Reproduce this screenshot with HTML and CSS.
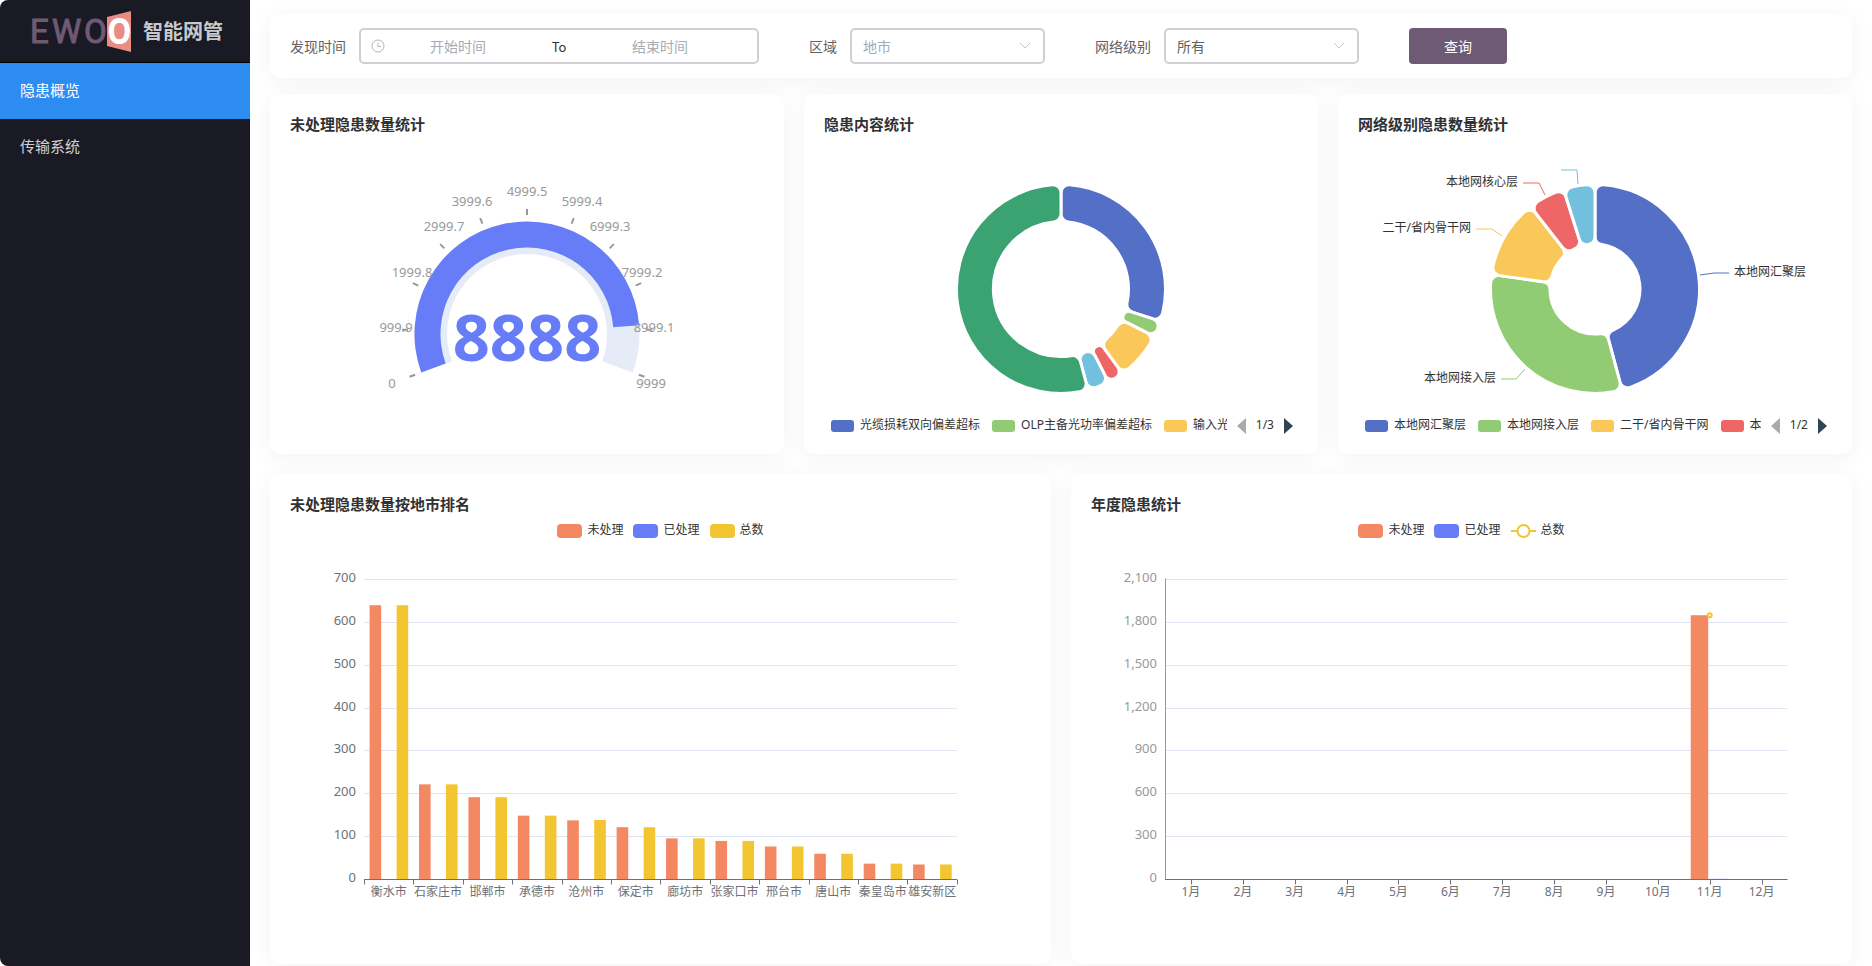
FILE: index.html
```
<!DOCTYPE html>
<html lang="zh-CN">
<head>
<meta charset="utf-8">
<title>智能网管</title>
<link rel="stylesheet" href="styles.css">
</head>
<body>
<div class="app">
  <aside class="sidebar">
    <div class="brand">
      <svg class="brand-logo" width="106" height="44" viewBox="-4 0 106 44" role="img" aria-label="EWOO">
        <text class="logo-text" x="-1 21 53" y="33">EWO</text>
        <path d="M76 7 L100 1 V42 L76 36 Z" fill="#e98c82"/>
        <text class="logo-text logo-text-light" x="77" y="33">O</text>
      </svg>
      <span class="brand-name">智能网管</span>
    </div>
    <nav class="menu">
      <a class="menu-item active" href="#">隐患概览</a>
      <a class="menu-item" href="#">传输系统</a>
    </nav>
  </aside>
  <main class="main">
    <form class="card filters">
      <div class="field">
        <label for="start">发现时间</label>
        <div class="range">
          <svg class="clock" width="14" height="14" viewBox="0 0 14 14" fill="none" stroke="#b4b6bc"><circle cx="7" cy="7" r="6"/><path d="M7 3.5V7.5H10"/></svg>
          <input id="start" type="text" placeholder="开始时间">
          <span class="range-sep">To</span>
          <input type="text" placeholder="结束时间" aria-label="结束时间">
        </div>
      </div>
      <div class="field">
        <label for="area">区域</label>
        <div class="select">
          <select id="area" class="empty"><option>地市</option></select>
          <svg width="12" height="8" viewBox="0 0 12 8" fill="none" stroke="#c0c4cc"><path d="M1 1L6 6L11 1"/></svg>
        </div>
      </div>
      <div class="field">
        <label for="level">网络级别</label>
        <div class="select">
          <select id="level"><option>所有</option></select>
          <svg width="12" height="8" viewBox="0 0 12 8" fill="none" stroke="#c0c4cc"><path d="M1 1L6 6L11 1"/></svg>
        </div>
      </div>
      <button class="query" type="button">查询</button>
    </form>
    <div class="row">
      <section class="card">
        <h2>未处理隐患数量统计</h2>
        <svg class="chart chart-full" id="gauge"></svg>
      </section>
      <section class="card">
        <h2>隐患内容统计</h2>
        <svg class="chart" id="content"></svg>
        <div class="pager">
          <ul class="legend">
            <li><i class="c-blue"></i>光缆损耗双向偏差超标</li>
            <li><i class="c-green"></i>OLP主备光功率偏差超标</li>
            <li><i class="c-yellow"></i>输入光</li>
          </ul>
          <button type="button" aria-label="上一页"><svg width="9" height="16" viewBox="0 0 9 16"><path d="M9 0V16L0 8Z" fill="#aaa"/></svg></button>
          <span>1/3</span>
          <button type="button" aria-label="下一页"><svg width="9" height="16" viewBox="0 0 9 16"><path d="M0 0V16L9 8Z" fill="#2f4554"/></svg></button>
        </div>
      </section>
      <section class="card">
        <h2>网络级别隐患数量统计</h2>
        <svg class="chart" id="levels"></svg>
        <div class="pager">
          <ul class="legend">
            <li><i class="c-blue"></i>本地网汇聚层</li>
            <li><i class="c-green"></i>本地网接入层</li>
            <li><i class="c-yellow"></i>二干/省内骨干网</li>
            <li><i class="c-red"></i>本</li>
          </ul>
          <button type="button" aria-label="上一页"><svg width="9" height="16" viewBox="0 0 9 16"><path d="M9 0V16L0 8Z" fill="#aaa"/></svg></button>
          <span>1/2</span>
          <button type="button" aria-label="下一页"><svg width="9" height="16" viewBox="0 0 9 16"><path d="M0 0V16L9 8Z" fill="#2f4554"/></svg></button>
        </div>
      </section>
    </div>
    <div class="row row-tall">
      <section class="card">
        <h2>未处理隐患数量按地市排名</h2>
        <ul class="legend legend-top">
          <li><i class="c-orange"></i>未处理</li>
          <li><i class="c-indigo"></i>已处理</li>
          <li><i class="c-gold"></i>总数</li>
        </ul>
        <svg class="chart" id="cities"></svg>
      </section>
      <section class="card">
        <h2>年度隐患统计</h2>
        <ul class="legend legend-top">
          <li><i class="c-orange"></i>未处理</li>
          <li><i class="c-indigo"></i>已处理</li>
          <li><svg width="25" height="14" viewBox="0 0 25 14" stroke="#f2c531" stroke-width="2" fill="#fff"><path d="M0 7H25"/><circle cx="12.5" cy="7" r="6"/></svg>总数</li>
        </ul>
        <svg class="chart" id="year"></svg>
      </section>
    </div>
  </main>
</div>
<script src="charts.js"></script>
</body>
</html>
```
FILE: styles.css
```
* { box-sizing: border-box; }
body {
  margin: 0;
  background: #fff;
  color: #303133;
  font-family: "Noto Sans", "Noto Sans CJK SC", sans-serif;
  font-size: 14px;
}
.app { display: flex; min-height: 100vh; }

.sidebar {
  flex: 0 0 250px;
  background: #191a23;
  border-radius: 8px 0 0 8px;
}
.brand {
  display: flex;
  align-items: center;
  gap: 10px;
  height: 63px;
  padding: 0 0 10px 27px;
  border-bottom: 1px solid #000;
}
.brand-logo { flex: none; margin-top: 12px; }
.logo-text { font: 33px Roboto, sans-serif; fill: #6f5a75; stroke: #6f5a75; stroke-width: 1px; }
.logo-text-light { fill: #fff; stroke: #fff; stroke-width: 2px; }
.brand-name { font-family: "Noto Sans CJK SC", sans-serif; font-size: 20px; font-weight: 700; line-height: 24px; margin-top: 10px; color: #c8c9cc; white-space: nowrap; }
.menu-item {
  display: block;
  padding: 0 20px 2px;
  font-size: 15px;
  line-height: 54px;
  color: #d1d1d3;
  text-decoration: none;
}
.menu-item.active { background: #2d8cf0; color: #fff; }

.main {
  flex: 1;
  min-width: 0;
  display: flex;
  flex-direction: column;
  padding: 14px 20px 2px;
}
.card {
  flex: 1;
  min-width: 0;
  background: #fff;
  border-radius: 10px;
  box-shadow: 0 4px 24px rgba(0, 0, 0, 0.05);
}
.filters {
  flex: none;
  display: flex;
  align-items: center;
  gap: 50px;
  padding: 14px 20px;
  margin-bottom: 16px;
}
.field { display: flex; align-items: center; gap: 13px; color: #606266; }
.range, .select {
  display: flex;
  align-items: center;
  height: 36px;
  border: 2px solid #d0cfd6;
  border-radius: 5px;
  background: #fff;
}
.range { width: 400px; padding: 0 24px 0 10px; }
.clock { flex: none; }
.range input {
  flex: 1;
  min-width: 0;
  border: 0;
  padding: 0;
  background: none;
  font: inherit;
  text-align: center;
  outline: none;
}
.range input::placeholder { color: #a8abb2; opacity: 1; }
.range-sep { flex: 0 0 56px; text-align: center; color: #303133; font-size: 13px; font-family: "Noto Sans CJK SC", sans-serif; }
.select { width: 195px; position: relative; }
.select select {
  width: 100%;
  height: 100%;
  border: 0;
  padding: 0 11px;
  background: none;
  appearance: none;
  font: inherit;
  color: #606266;
  outline: none;
}
.select .empty { color: #a8abb2; }
.select svg { position: absolute; right: 12px; pointer-events: none; }
.query {
  width: 98px;
  height: 36px;
  border: 0;
  border-radius: 4px;
  background: #6f5a75;
  color: #fff;
  font: inherit;
}

.row { display: flex; gap: 20px; margin-bottom: 20px; }
.row-tall { flex: 1; margin-bottom: 0; }
.row .card { display: flex; flex-direction: column; height: 360px; padding: 20px; }
.row-tall .card { height: auto; min-height: 490px; }
h2 { margin: 0 0 2px; font-size: 15px; line-height: 20px; font-weight: 700; color: #303133; }

.legend {
  display: flex;
  gap: 12px;
  margin: 0;
  padding: 0;
  list-style: none;
  font-size: 12px;
  line-height: 18px;
  color: #333;
}
.legend li { display: flex; align-items: center; gap: 6px; flex: none; }
.legend i, .legend svg { margin-top: 2px; }
.legend i { width: 23px; height: 12px; border-radius: 3px; }
.legend-top { justify-content: center; gap: 10px; margin: 5px 0 1px; }
.legend-top li { gap: 5px; }
.legend-top i { width: 25px; height: 14px; border-radius: 4px; }
.pager { display: flex; align-items: center; gap: 10px; padding: 0 5px 0 7px; font-size: 12px; line-height: 18px; color: #333; }
.pager .legend { flex: 1; min-width: 0; overflow: hidden; }
.pager button { display: flex; border: 0; padding: 0; background: none; }
.pager button svg { margin-top: 2px; }
.c-blue { background: #5470c6; }
.c-green { background: #91cc75; }
.c-yellow { background: #fac858; }
.c-red { background: #ee6666; }
.c-orange { background: #f38863; }
.c-indigo { background: #677df8; }
.c-gold { background: #f2c531; }

.chart { display: block; width: 100%; height: 280px; }
.chart-full { height: 298px; }
.row-tall .chart { height: 400px; }
.chart text { font-size: 12px; fill: #333; }
.chart .num { font-size: 13px; }
.chart .axis { fill: #6e7079; }
.chart .muted { fill: #999; }
.chart .value { font-size: 65px; font-weight: 700; fill: #677df8; }
```
FILE: charts.js
```
const NS = 'http://www.w3.org/2000/svg';

function add(svg, tag, attrs, text) {
  const el = document.createElementNS(NS, tag);
  for (const key in attrs) el.setAttribute(key, attrs[key]);
  if (text !== undefined) el.textContent = text;
  svg.appendChild(el);
  return el;
}

// Angles run clockwise in degrees from twelve o'clock.
function polar(cx, cy, r, deg) {
  const a = deg * Math.PI / 180;
  return [(cx + r * Math.sin(a)).toFixed(2), (cy - r * Math.cos(a)).toFixed(2)].join(' ');
}

function sector(cx, cy, inner, outer, from, to, corner) {
  const half = (to - from) / 2 * Math.PI / 180;
  const s = Math.sin(Math.min(half, Math.PI / 2));
  const ro = Math.min(corner, outer * s / (1 + s));
  const ri = s < 1 ? Math.min(corner, inner * s / (1 - s)) : corner;
  const ao = Math.asin(ro / (outer - ro)) * 180 / Math.PI;
  const ai = Math.asin(ri / (inner + ri)) * 180 / Math.PI;
  const lo = Math.sqrt((outer - ro) ** 2 - ro ** 2);
  const li = Math.sqrt((inner + ri) ** 2 - ri ** 2);
  const bigO = to - from - 2 * ao > 180 ? 1 : 0;
  const bigI = to - from - 2 * ai > 180 ? 1 : 0;
  const p = (r, a) => polar(cx, cy, r, a);
  return `M${p(li, from)}L${p(lo, from)}A${ro} ${ro} 0 0 1 ${p(outer, from + ao)}` +
    `A${outer} ${outer} 0 ${bigO} 1 ${p(outer, to - ao)}A${ro} ${ro} 0 0 1 ${p(lo, to)}` +
    `L${p(li, to)}A${ri} ${ri} 0 0 1 ${p(inner, to - ai)}` +
    `A${inner} ${inner} 0 ${bigI} 0 ${p(inner, from + ai)}A${ri} ${ri} 0 0 1 ${p(li, from)}Z`;
}

function ring(cx, cy, inner, outer, from, to) {
  const big = to - from > 180 ? 1 : 0;
  const p = (r, a) => polar(cx, cy, r, a);
  return `M${p(outer, from)}A${outer} ${outer} 0 ${big} 1 ${p(outer, to)}` +
    `L${p(inner, to)}A${inner} ${inner} 0 ${big} 0 ${p(inner, from)}Z`;
}

function gauge(svg) {
  const cx = svg.clientWidth / 2, cy = 198, max = 9999, value = 8888;
  add(svg, 'path', { d: ring(cx, cy, 80, 112.5, -110, 110), fill: '#e6ebf8' });
  add(svg, 'path', { d: ring(cx, cy, 86.5, 112.5, -110, -110 + 220 * value / max), fill: '#677df8' });
  const labels = [
    [-135, 50], [-131, -6], [-115, -61], [-83, -107], [-55, -132], [0, -142],
    [55, -132], [83, -107], [115, -61], [127, -6], [124, 50]
  ];
  labels.forEach(([x, y], i) => {
    const a = -110 + 22 * i;
    add(svg, 'path', { d: `M${polar(cx, cy, 119, a)}L${polar(cx, cy, 125, a)}`, stroke: '#999', 'stroke-width': 2 });
    add(svg, 'text', { class: 'num muted', x: cx + x, y: cy + y + 4, 'text-anchor': 'middle' }, +(max * i / 10).toFixed(1));
  });
  add(svg, 'text', { class: 'value', x: cx, y: cy + 27, 'text-anchor': 'middle' }, value);
}

function donut(svg, inner, outer, slices) {
  const cx = svg.clientWidth / 2, cy = 153;
  let from = 0;
  for (const { to, color, label, line } of slices) {
    add(svg, 'path', { d: sector(cx, cy, inner, outer, from, to, 8), fill: color, stroke: '#fff', 'stroke-width': 3 });
    from = to;
    if (!line) continue;
    add(svg, 'polyline', { points: line.map(([x, y]) => `${cx + x},${cy + y}`).join(' '), fill: 'none', stroke: color });
    if (!label) continue;
    const [ex, ey] = line[2];
    const side = ex > 0 ? 1 : -1;
    add(svg, 'text', { x: cx + ex + 5 * side, y: cy + ey + 3, 'text-anchor': side > 0 ? 'start' : 'end' }, label);
  }
}

function grid(svg, o) {
  const w = svg.clientWidth, x0 = Math.round(w * 0.1), x1 = w * (1 - o.right), top = 39.5, bottom = 339.5;
  for (let i = 0; i <= 7; i++) {
    const y = Math.round(bottom - 300 * i / 7 - 0.5) + 0.5;
    if (i) add(svg, 'path', { d: `M${x0} ${y}H${x1}`, stroke: '#e0e6f1' });
    add(svg, 'text', { class: 'num ' + o.yClass, x: x0 - 8, y: y + 2, 'text-anchor': 'end' }, (o.step * i).toLocaleString('en-US'));
  }
  const band = (x1 - x0) / 12;
  const plot = { x0, x1, top, bottom, band, scale: 300 / (o.step * 7) };
  o.bars(plot);
  if (o.yLine) add(svg, 'path', { d: `M${x0 + 0.5} ${top - 1}V${bottom}`, stroke: '#999' });
  add(svg, 'path', { d: `M${x0} ${bottom}H${x1}`, stroke: '#6e7079' });
  for (let i = 0; i <= 12; i++) {
    if (o.centerTicks && i === 12) break;
    const x = Math.round(x0 + band * (i + (o.centerTicks ? 0.5 : 0))) + 0.5;
    add(svg, 'path', { d: `M${x} ${bottom}v5`, stroke: '#6e7079' });
  }
  o.names.forEach((name, i) => {
    add(svg, 'text', { class: 'axis', x: x0 + band * (i + 0.5), y: bottom + 16, 'text-anchor': 'middle' }, name);
  });
}

function draw() {
  document.querySelectorAll('.chart').forEach(svg => svg.replaceChildren());
  const get = id => document.getElementById(id);

  gauge(get('gauge'));
  donut(get('content'), 67.5, 104.5, [
    { to: 108, color: '#5470c6' },
    { to: 117, color: '#91cc75' },
    { to: 144, color: '#fac858' },
    { to: 153, color: '#ee6666' },
    { to: 165, color: '#73c0de' },
    { to: 360, color: '#3ba272' }
  ]);
  donut(get('levels'), 45, 104.5, [
    { to: 165, color: '#5470c6', label: '本地网汇聚层', line: [[105, -14], [119, -16], [134, -16]] },
    { to: 278, color: '#91cc75', label: '本地网接入层', line: [[-70, 80], [-79, 90], [-94, 90]] },
    { to: 322, color: '#fac858', label: '二干/省内骨干网', line: [[-93, -53], [-103, -60], [-119, -60]] },
    { to: 342.5, color: '#ee6666', label: '本地网核心层', line: [[-50, -94], [-56, -106], [-72, -106]] },
    { to: 360, color: '#73c0de', label: '', line: [[-17, -105], [-18, -119], [-34, -119]] }
  ]);

  const cities = [
    ['衡水市', 640], ['石家庄市', 222], ['邯郸市', 192], ['承德市', 149], ['沧州市', 138, 1], ['保定市', 122],
    ['廊坊市', 96], ['张家口市', 90], ['邢台市', 77], ['唐山市', 60], ['秦皇岛市', 37], ['雄安新区', 35]
  ];
  const citySvg = get('cities');
  grid(citySvg, {
    right: 0.1, step: 100, yClass: 'axis', names: cities.map(c => c[0]),
    bars: g => cities.forEach(([, open, done = 0], i) => {
      [[open, '#f38863'], [done, '#677df8'], [open + done, '#f2c531']].forEach(([v, color], k) => {
        const h = v * g.scale;
        add(citySvg, 'rect', { x: g.x0 + g.band * i + 5.6 + 13.5 * k, y: g.bottom - h, width: 11.6, height: h, fill: color });
      });
    })
  });

  const yearSvg = get('year');
  grid(yearSvg, {
    right: 0.06, step: 300, yClass: 'muted', yLine: true, centerTicks: true,
    names: Array.from({ length: 12 }, (_, i) => `${i + 1}月`),
    bars: g => {
      const c = g.x0 + g.band * 10.5, y = g.bottom - 1850 * g.scale;
      add(yearSvg, 'rect', { x: c - 19, y, width: 17.5, height: g.bottom - y, fill: '#f38863' });
      add(yearSvg, 'rect', { x: c + 1.5, y: g.bottom - 1, width: 17.5, height: 1, fill: '#677df8', opacity: 0.3 });
      add(yearSvg, 'circle', { cx: c, cy: y, r: 2, fill: '#fff', stroke: '#f2c531', 'stroke-width': 2 });
    }
  });
}

draw();
window.addEventListener('resize', draw);
```
